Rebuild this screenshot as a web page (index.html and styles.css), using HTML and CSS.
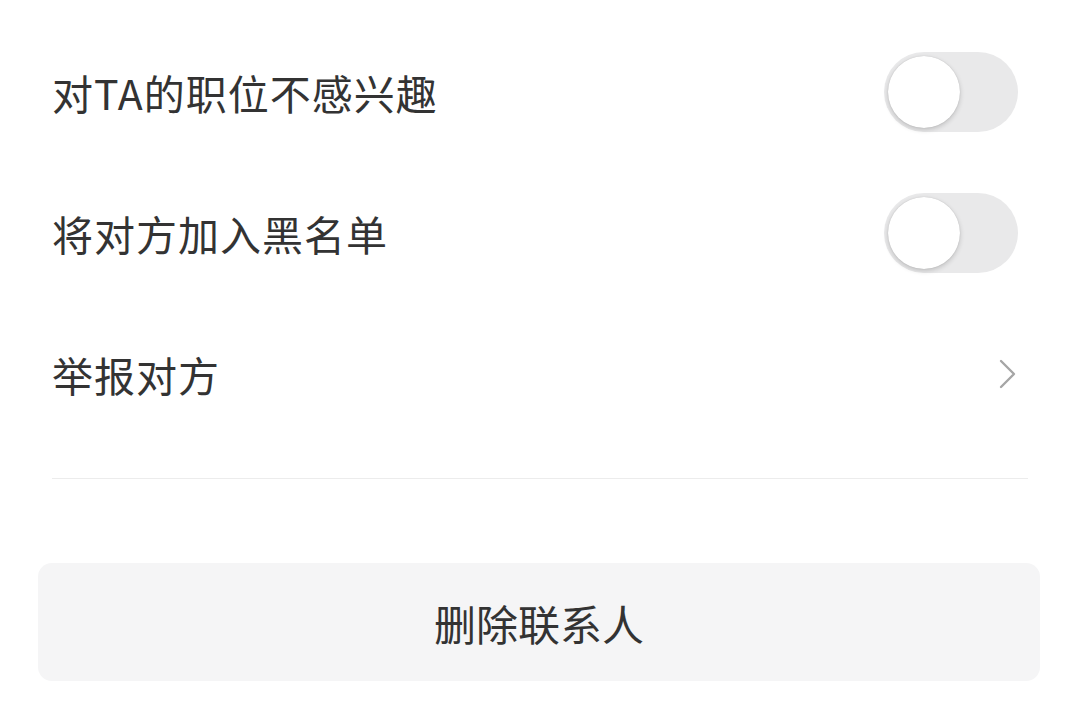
FILE: index.html
```html
<!DOCTYPE html>
<html lang="zh">
<head>
    <meta charset="UTF-8">
    <meta name="viewport" content="width=device-width, initial-scale=1.0">
    <title>聊天设置</title>
    <link rel="stylesheet" href="styles.css">
</head>
<body>
    <div class="page">
        <div class="list">
            <div class="row">
                <span class="label">对TA的职位不感兴趣</span>
                <div class="switch"><div class="knob"></div></div>
            </div>
            <div class="row">
                <span class="label">将对方加入黑名单</span>
                <div class="switch"><div class="knob"></div></div>
            </div>
            <div class="row">
                <span class="label">举报对方</span>
                <svg class="arrow" width="20" height="32" viewBox="0 0 20 32">
                    <polyline points="3,3 16,16 3,29" fill="none" stroke="#a6a6a6" stroke-width="2.4" stroke-linecap="round" stroke-linejoin="round"/>
                </svg>
            </div>
        </div>
        <div class="divider"></div>
        <button class="delete-btn">删除联系人</button>
    </div>
</body>
</html>
```

FILE: styles.css
```css
body {
    margin: 0;
    background-color: #fff;
    font-family: "Noto Sans CJK SC", "Noto Sans", sans-serif;
    color: #333;
}

.page {
    padding-top: 21px;
}

.list {
    padding: 0 52px;
}

.row {
    display: flex;
    align-items: center;
    justify-content: space-between;
    height: 141px;
}

.label {
    font-size: 41px;
    letter-spacing: 1px;
}

.switch {
    width: 134px;
    height: 80px;
    border-radius: 40px;
    background-color: #e9e9ea;
    margin-right: 10px;
    display: flex;
    align-items: center;
    padding-left: 4px;
    box-sizing: border-box;
}

.knob {
    width: 72px;
    height: 72px;
    border-radius: 50%;
    background-color: #fff;
    box-shadow: 0 2px 5px rgba(0, 0, 0, 0.18), 0 0 1px rgba(0, 0, 0, 0.2);
}

.arrow {
    margin-right: 10px;
}

.divider {
    margin: 34px 52px 0;
    height: 1px;
    background-color: #ececec;
}

.delete-btn {
    display: block;
    margin: 84px 40px 0 38px;
    width: calc(100% - 78px);
    height: 118px;
    border: none;
    border-radius: 14px;
    background-color: #f5f5f6;
    color: #333;
    font-family: "Noto Sans CJK SC", sans-serif;
    font-size: 42px;
}
```
